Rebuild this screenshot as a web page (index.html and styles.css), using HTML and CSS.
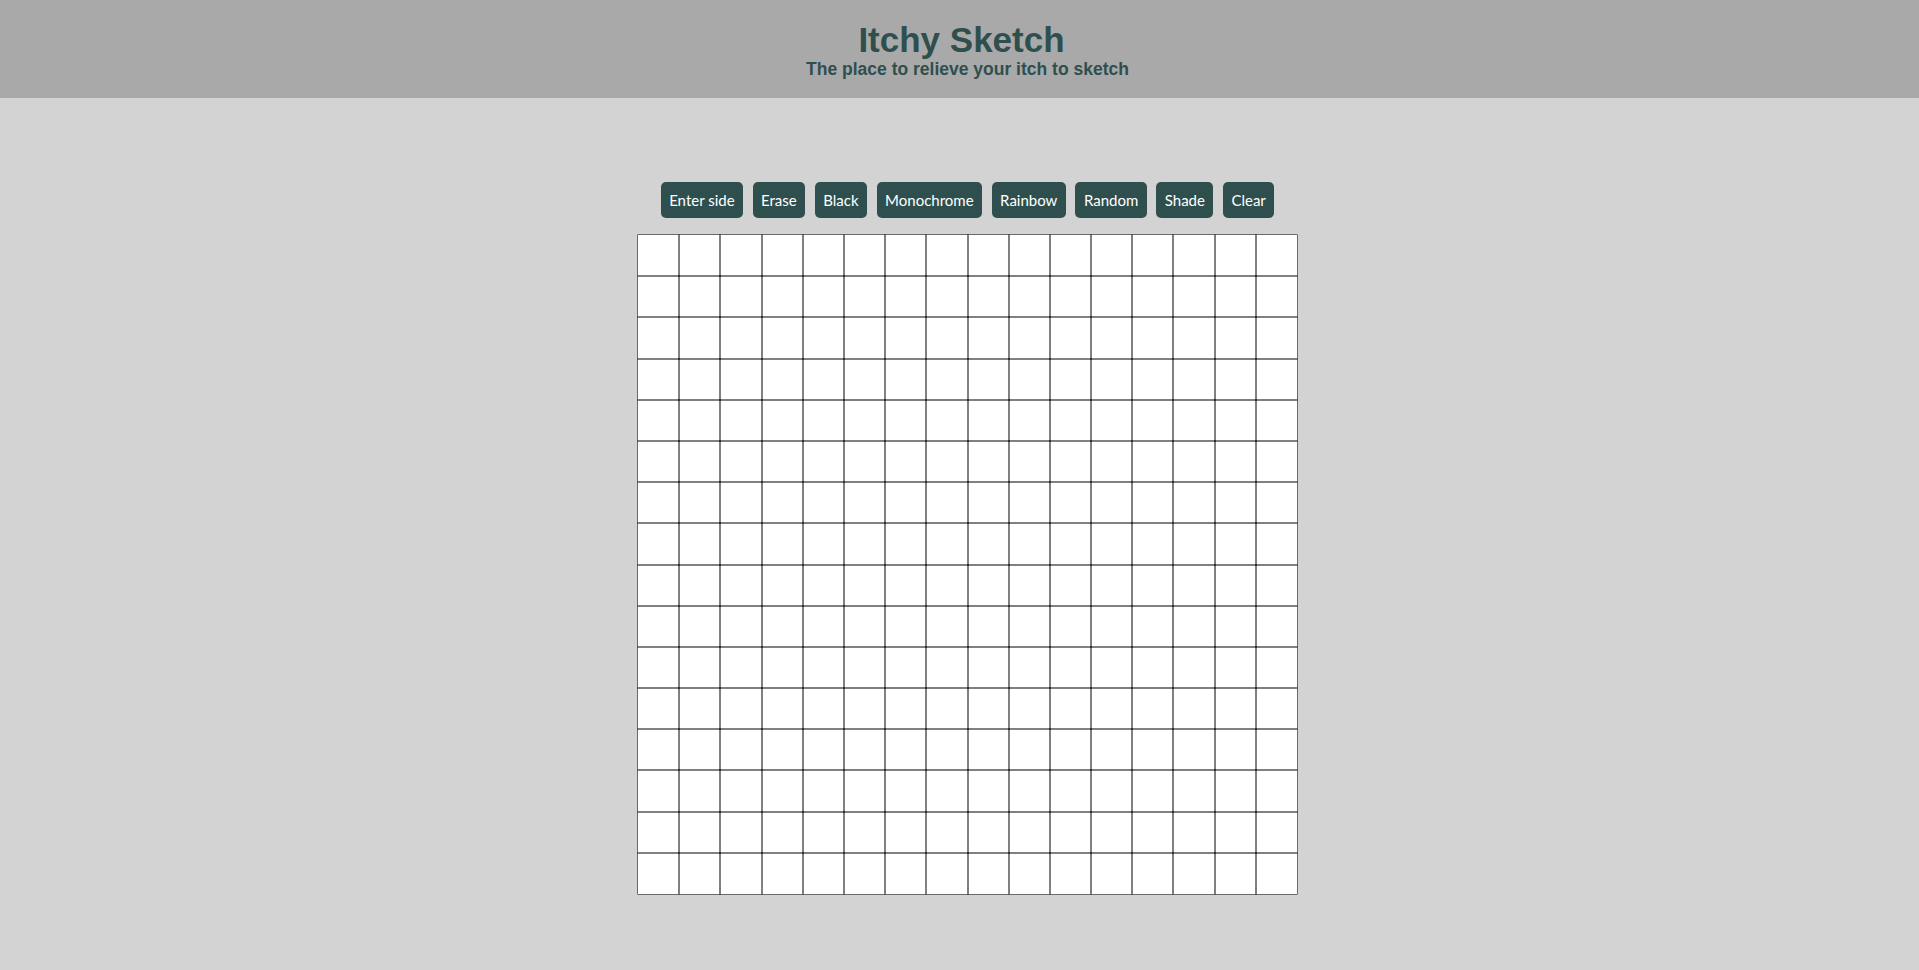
FILE: index.html
```html
<!DOCTYPE html>
<html>
<head>
<meta charset="utf-8">
<title>Itchy Sketch</title>
<link rel="stylesheet" href="styles.css">
</head>
<body>
<header class="header">
  <h1 class="title">Itchy Sketch</h1>
  <p class="subtitle">The place to relieve your itch to sketch</p>
</header>
<main class="main">
  <div class="controls">
    <button class="btn">Enter side</button>
    <button class="btn">Erase</button>
    <button class="btn">Black</button>
    <button class="btn">Monochrome</button>
    <button class="btn">Rainbow</button>
    <button class="btn">Random</button>
    <button class="btn">Shade</button>
    <button class="btn">Clear</button>
  </div>
  <div class="grid" id="grid"></div>
</main>
<script src="script.js"></script>
</body>
</html>
```
FILE: styles.css
```css
html, body {
  margin: 0;
  padding: 0;
}
body {
  background: #d3d3d3;
  font-family: "Liberation Sans", Arial, sans-serif;
  min-height: 970px;
}
.header {
  background: #a9a9a9;
  height: 98px;
  box-sizing: border-box;
  padding-top: 22px;
  display: flex;
  flex-direction: column;
  align-items: center;
  color: #2f4f4f;
}
.title {
  margin: 0;
  font-size: 35px;
  line-height: 36px;
  font-weight: bold;
  padding-left: 4px;
}
.subtitle {
  margin: 0;
  font-size: 17.5px;
  line-height: 22px;
  font-weight: bold;
  padding-left: 16px;
}
.main {
  padding-left: 16px;
  padding-top: 84px;
  display: flex;
  flex-direction: column;
  align-items: center;
}
.controls {
  display: flex;
  gap: 9.5px;
  height: 36px;
}
.btn {
  background: #2f4f4f;
  color: #ffffff;
  border: none;
  border-radius: 5px;
  height: 36px;
  padding: 0 8.5px;
  font-family: Lato, "Open Sans", sans-serif;
  font-size: 15px;
  cursor: pointer;
}
.grid {
  margin-top: 17px;
  width: 659px;
  height: 659px;
  background: #ffffff;
  display: grid;
  grid-template-columns: repeat(16, 1fr);
  grid-template-rows: repeat(16, 1fr);
}
.cell {
  box-shadow: 0 0 0 0.5px #000000;
}
```
FILE: script.js
```js
const grid = document.getElementById('grid');
for (let i = 0; i < 256; i++) {
  const c = document.createElement('div');
  c.className = 'cell';
  grid.appendChild(c);
}
```
